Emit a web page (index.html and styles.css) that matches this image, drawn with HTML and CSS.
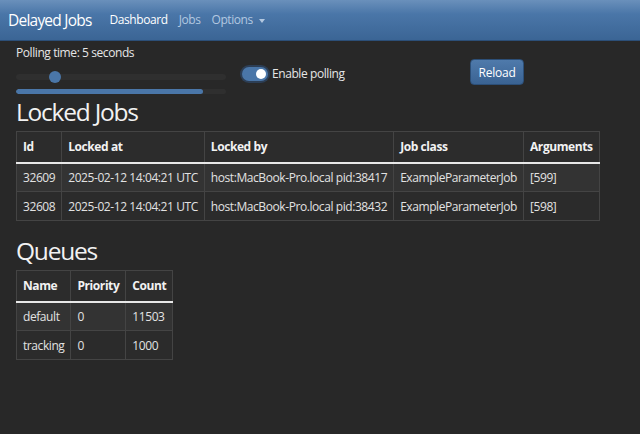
FILE: index.html
```html
<!DOCTYPE html>
<html>
<head>
<meta charset="utf-8">
<link rel="stylesheet" href="styles.css">
</head>
<body>
<nav class="navbar">
  <span class="brand">Delayed Jobs</span>
  <a class="nav-link active">Dashboard</a>
  <a class="nav-link">Jobs</a>
  <a class="nav-link">Options <span class="caret"></span></a>
</nav>
<main class="container">
  <div class="controls">
    <div class="polling">
      <div class="label">Polling time: 5 seconds</div>
      <div class="slider"><span class="thumb"></span></div>
      <div class="progress"><span class="bar" style="width:89%"></span></div>
    </div>
    <div class="toggle-wrap">
      <span class="toggle"><span class="knob"></span></span>
      <span class="toggle-label">Enable polling</span>
    </div>
    <button class="btn">Reload</button>
  </div>

  <h2>Locked Jobs</h2>
  <table class="table">
    <thead>
      <tr><th>Id</th><th>Locked at</th><th>Locked by</th><th>Job class</th><th>Arguments</th></tr>
    </thead>
    <tbody>
      <tr><td>32609</td><td>2025-02-12 14:04:21 UTC</td><td>host:MacBook-Pro.local pid:38417</td><td>ExampleParameterJob</td><td>[599]</td></tr>
      <tr><td>32608</td><td>2025-02-12 14:04:21 UTC</td><td>host:MacBook-Pro.local pid:38432</td><td>ExampleParameterJob</td><td>[598]</td></tr>
    </tbody>
  </table>

  <h2 class="queues">Queues</h2>
  <table class="table">
    <thead>
      <tr><th>Name</th><th>Priority</th><th>Count</th></tr>
    </thead>
    <tbody>
      <tr><td>default</td><td>0</td><td>11503</td></tr>
      <tr><td>tracking</td><td>0</td><td>1000</td></tr>
    </tbody>
  </table>
</main>
</body>
</html>
```
FILE: styles.css
```css
* { box-sizing: border-box; }
html, body { margin: 0; padding: 0; }
body {
  background: #282828;
  color: #e8e8e8;
  font-family: "Open Sans", "Noto Sans", sans-serif;
  font-size: 12px;
  letter-spacing: -0.035em;
  height: 434px;
  overflow: hidden;
}
.navbar {
  height: 41px;
  display: flex;
  align-items: center;
  padding: 0 8px 1px;
  background: linear-gradient(#6a90bb, #4a76a8 35%, #3b6595);
  border-bottom: 1px solid #2c4f78;
}
.brand {
  color: #fff;
  font-size: 15.5px;
  letter-spacing: -0.05em;
  margin-right: 18px;
}
.nav-link {
  color: #b3c8e0;
  font-size: 12px;
  margin-right: 11px;
}
.nav-link.active { color: #fff; }
.caret {
  display: inline-block;
  width: 0; height: 0;
  border-left: 3px solid transparent;
  border-right: 3px solid transparent;
  border-top: 4px solid #b3c8e0;
  vertical-align: middle;
  margin-left: 3px;
}
.container { padding: 0 16px; }
.controls {
  display: flex;
  align-items: flex-start;
  height: 56px;
  padding-top: 4px;
}
.polling { width: 210px; }
.label { font-size: 12px; line-height: 16px; color: #e6e6e6; }
.slider {
  position: relative;
  margin-top: 13px;
  height: 6px;
  background: #2f2f2f;
  border-radius: 3px;
}
.thumb {
  position: absolute;
  left: 33px; top: -3px;
  width: 12px; height: 12px;
  border-radius: 50%;
  background: #4a76a8;
}
.progress {
  margin-top: 9px;
  height: 5px;
  background: #2f2f2f;
  border-radius: 3px;
  overflow: hidden;
}
.bar { display: block; height: 100%; background: #4a76a8; border-radius: 3px; }
.toggle-wrap {
  display: flex;
  align-items: center;
  margin-left: 16px;
  margin-top: 20px;
  width: 124px;
}
.toggle {
  position: relative;
  width: 26px; height: 14px;
  border-radius: 7px;
  background: #4a76a8;
  box-shadow: 0 0 0 2px #2c3e55;
}
.knob {
  position: absolute;
  right: 2px; top: 2px;
  width: 10px; height: 10px;
  border-radius: 50%;
  background: #fff;
}
.toggle-label { margin-left: 4px; font-size: 12px; color: #e6e6e6; }
.btn {
  margin-left: 104px;
  margin-top: 14px;
  width: 54px; height: 26px;
  border: 1px solid #2c4f78;
  border-radius: 4px;
  background: linear-gradient(#4f7aab, #3a6393);
  color: #fff;
  font-family: inherit;
  font-size: 12px;
  letter-spacing: -0.02em;
  padding: 0;
}
h2 {
  font-weight: 400;
  font-size: 24.5px;
  letter-spacing: -0.05em;
  margin: 0 0 4px;
  line-height: 30px;
  color: #f2f2f2;
}
h2.queues { margin-top: 15px; }
.table {
  border-collapse: collapse;
  border: 1px solid #444;
}
.table th, .table td {
  border: 1px solid #444;
  padding: 0 6px;
  height: 29px;
  text-align: left;
  white-space: nowrap;
}
.table th {
  font-weight: 700;
  color: #f2f2f2;
  background: #2c2c2c;
  height: 31px;
  border-bottom: 2px solid #e8e8e8;
}
.table tbody tr:nth-child(odd) td { background: #333333; }
.table tbody tr:nth-child(even) td { background: #2b2b2b; }
.table td { color: #e2e2e2; }
```
